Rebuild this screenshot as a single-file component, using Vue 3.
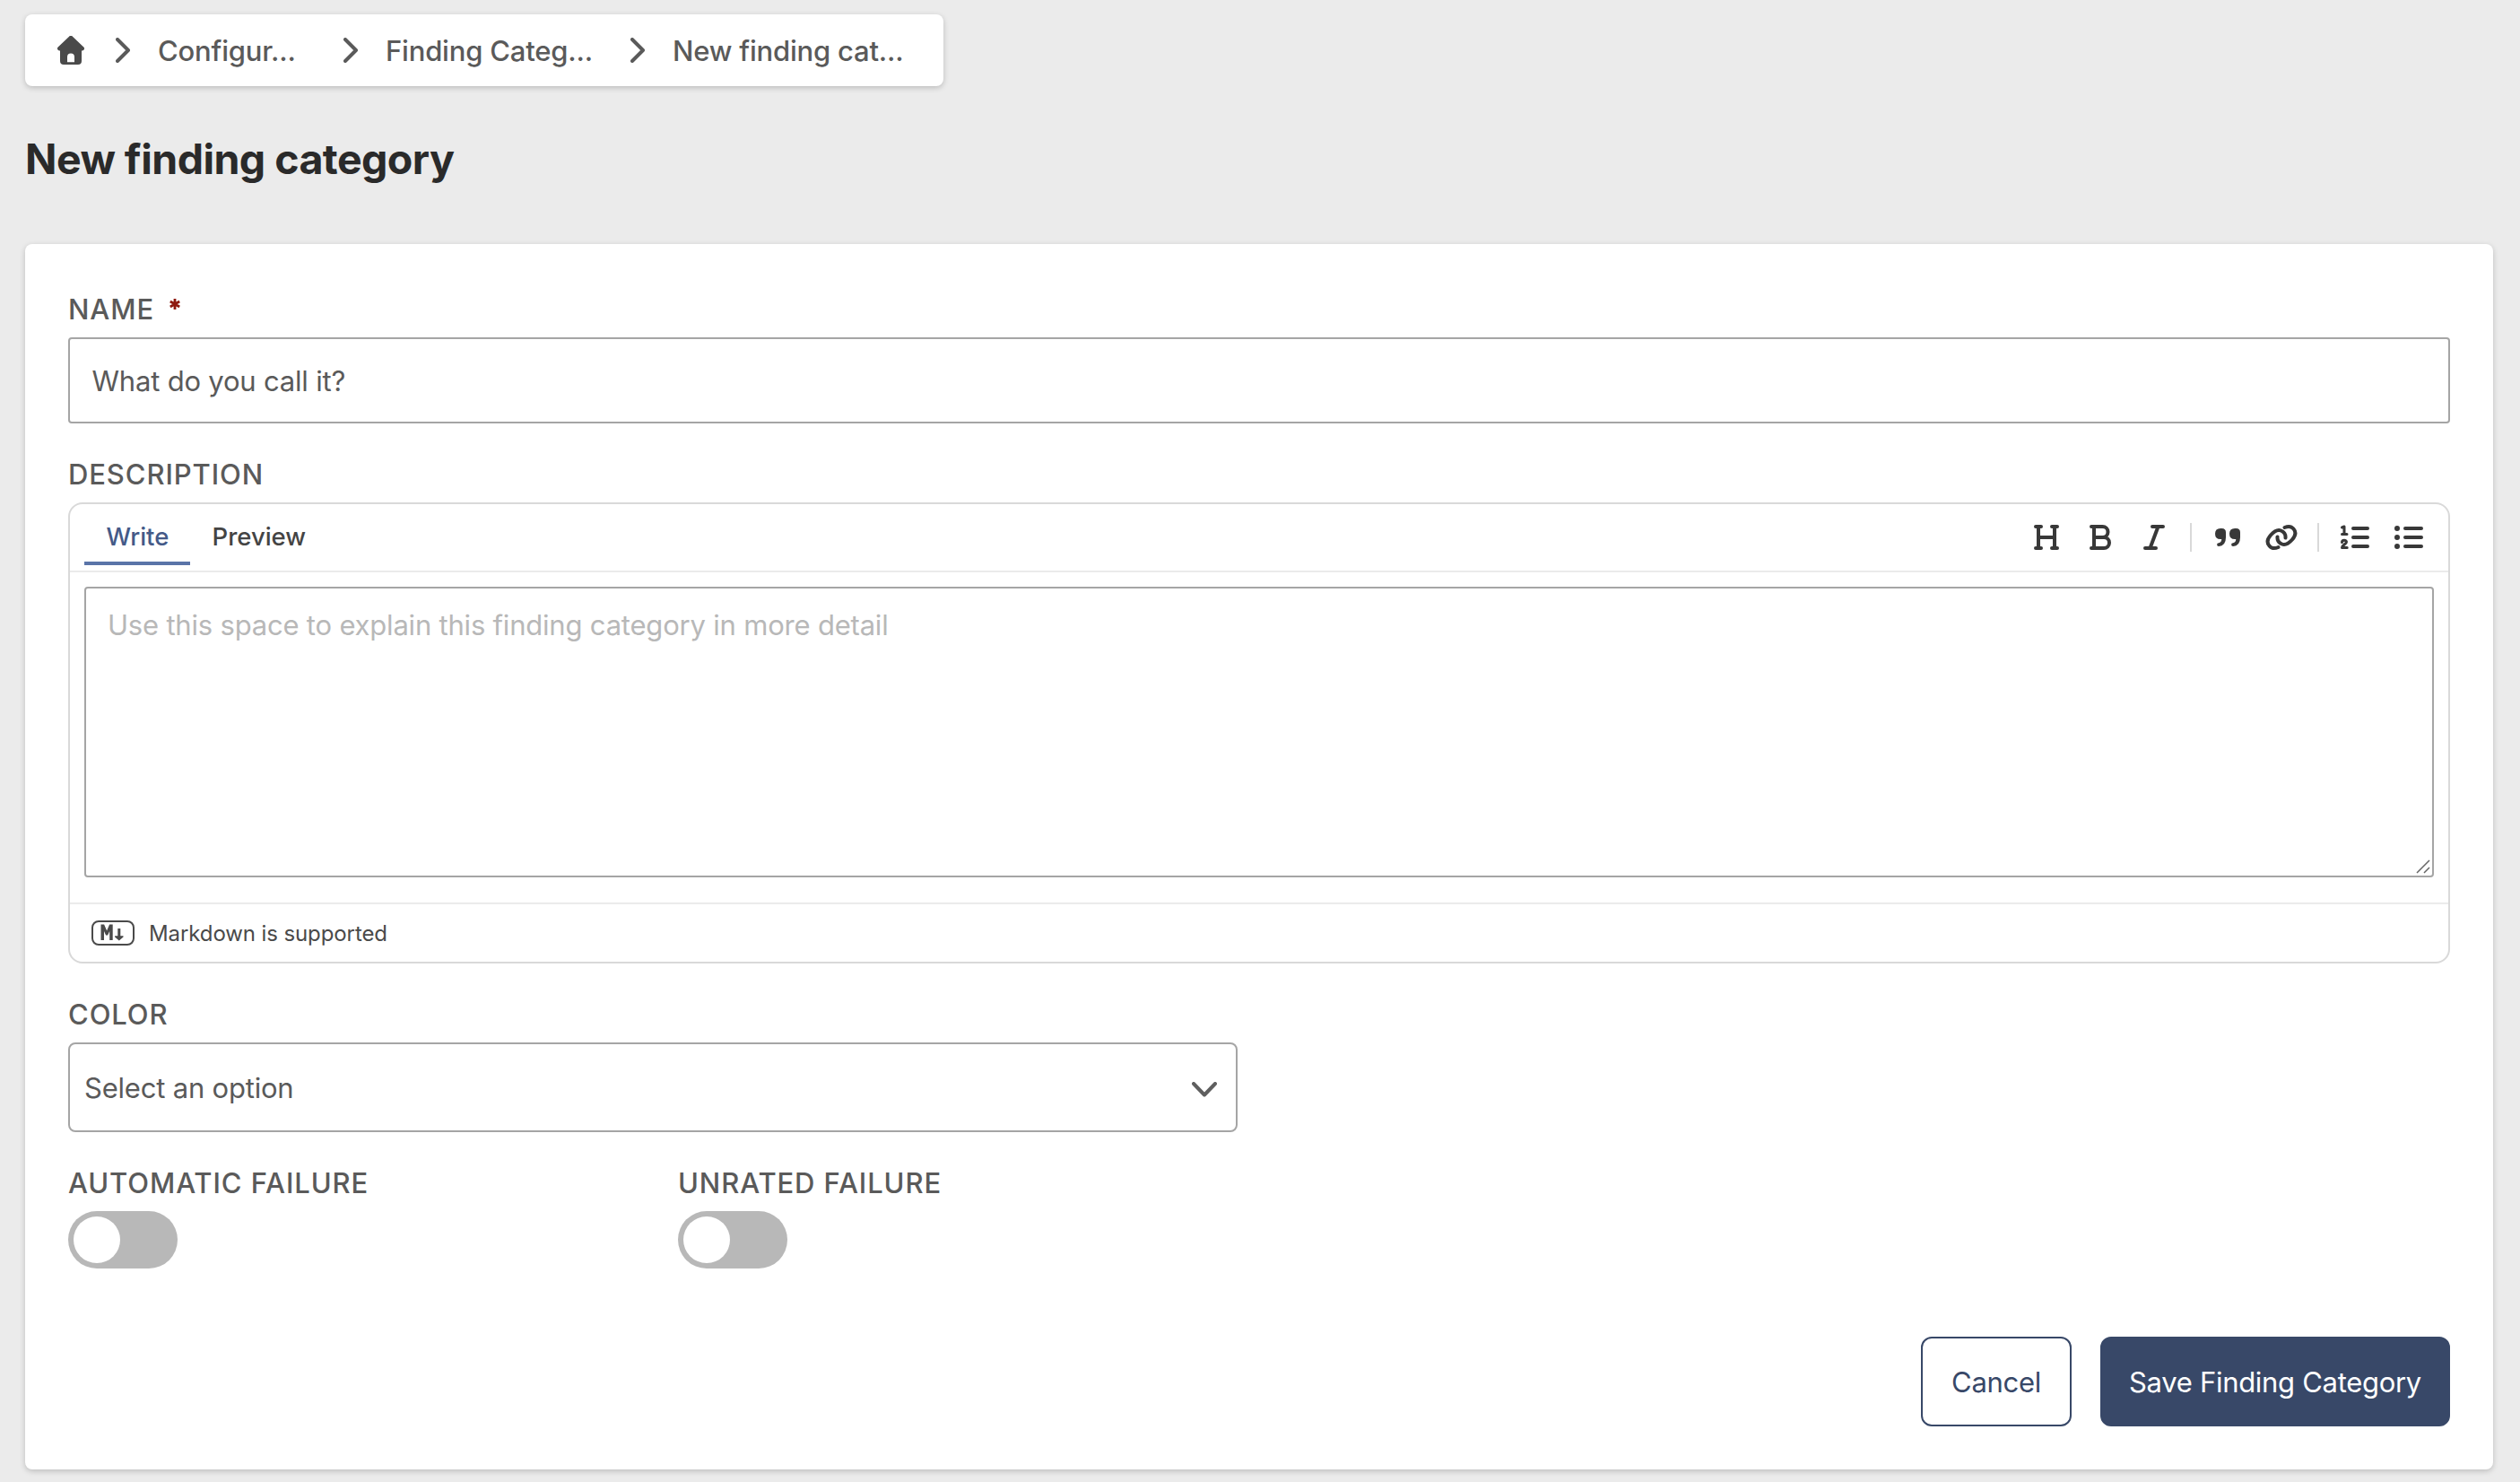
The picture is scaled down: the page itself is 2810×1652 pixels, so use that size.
<script setup>
import { ref } from 'vue'

const crumbs = ['Configur...', 'Finding Categ...', 'New finding cat...']
const toggles = ref([
  { label: 'AUTOMATIC FAILURE', on: false },
  { label: 'UNRATED FAILURE', on: false },
])
</script>

<template>
  <div class="page">
    <nav class="crumbs">
      <svg class="home" width="30" height="32" viewBox="0 0 30 32">
        <path d="M12.8 .9a3.1 3.1 0 0 1 4.4 0L29.3 12.600a2.200 2.200 0 0 1-1.600 3.800H27V28a4 4 0 0 1-4 4H7a4 4 0 0 1-4-4V16.400H2.300A2.200 2.200 0 0 1 .7 12.600ZM11 29.200h8V23.500a4 4 0 0 0-8 0Z" fill="#4a4a4a" fill-rule="evenodd" />
      </svg>
      <template v-for="c in crumbs" :key="c">
        <svg class="sep" width="16" height="28" viewBox="0 0 16 28">
          <path d="M2 2l12 12L2 26" fill="none" stroke="#5a5a5a" stroke-width="4" stroke-linecap="round" stroke-linejoin="round" />
        </svg>
        <span class="crumb">{{ c }}</span>
      </template>
    </nav>

    <h1>New finding category</h1>

    <form class="card" @submit.prevent>
      <label class="lbl">NAME<svg class="req" width="12" height="12" viewBox="0 0 12 12"><path d="M6 0v12M.8 3l10.400 6M.8 9L11.200 3" stroke="#8f1a10" stroke-width="2.800" /></svg></label>
      <div class="input"><span>What do you call it?</span></div>

      <label class="lbl">DESCRIPTION</label>
      <div class="editor">
        <div class="bar">
          <div class="tab active">Write</div>
          <div class="tab">Preview</div>
          <div class="tools">
            <svg viewBox="0 0 40 40"><path d="M8 8h6M26 8h6M8 32h6M26 32h6M11 8v24M29 8v24M11 20h18" /></svg>
            <svg viewBox="0 0 40 40"><path d="M10 8h12.500a6 6 0 0 1 0 12H13M22 20h2a6 6 0 0 1 0 12H10M13 8v24" /></svg>
            <svg viewBox="0 0 40 40"><path d="M18 8h12M10 32h12M24.500 8l-9 24" /></svg>
            <i class="rule"></i>
            <svg viewBox="0 0 40 40"><path class="fill" d="M12 10h1.500q4.500 0 4.500 4.500V20q0 9.500-8 10a1.900 1.900 0 0 1 0-3.800q3-.4 3.300-4.200H12q-6 0-6-6t6-6ZM28 10h1.500q4.500 0 4.500 4.500V20q0 9.500-8 10a1.900 1.900 0 0 1 0-3.800q3-.4 3.300-4.200H28q-6 0-6-6t6-6Z" /></svg>
            <svg viewBox="0 0 40 40"><path d="M16.500 31C13 32.500 9 32.500 6.500 29.500 3 25.500 4.500 21.500 8 17.500 12 13 16 11 19.500 12.500 23 14 24.800 17 24.500 20.500M23.500 9C27 7.500 31 7.500 33.500 10.500 37 14.500 35.500 18.500 32 22.500 28 27 24 29 20.500 27.500 17 26 15.200 23 15.500 19.500" /></svg>
            <i class="rule"></i>
            <svg viewBox="0 0 40 40"><path d="M18 10h16M18 20h16M18 30h16" /><path class="thin" d="M5.500 9l2.500-1v8M5.500 16.500h5.500M5.500 25.500c0-3 5-3 5-.4 0 2.400-4.500 3-5 6.400h5.700" /></svg>
            <svg viewBox="0 0 40 40"><path d="M16 10h18M16 20h18M16 30h18" /><path class="fill" d="M7 7a3 3 0 1 1 0 6a3 3 0 0 1 0-6M7 17a3 3 0 1 1 0 6a3 3 0 0 1 0-6M7 27a3 3 0 1 1 0 6a3 3 0 0 1 0-6" /></svg>
          </div>
        </div>
        <div class="area">
          <span>Use this space to explain this finding category in more detail</span>
          <svg class="grip" width="16" height="16" viewBox="0 0 16 16"><path d="M1 15L15 1M9 15l6-6" stroke="#666" stroke-width="1.500" /></svg>
        </div>
        <div class="foot">
          <svg width="48" height="28" viewBox="0 0 48 28">
            <rect x="1" y="1" width="46" height="26" rx="7" fill="none" stroke="#4a4a4a" stroke-width="2" />
            <path d="M10.500 22V4.500h3.600l3 7 3-7h3.600V22h-3.500V12l-2.100 4.500h-2L14 12v10ZM29.300 9h3v8.300h3.200v1.200l-4.700 4-4.700-4v-1.200h3.200Z" fill="#4a4a4a" />
          </svg>
          <span>Markdown is supported</span>
        </div>
      </div>

      <label class="lbl">COLOR</label>
      <div class="select">
        <span>Select an option</span>
        <svg width="28" height="17" viewBox="0 0 28 17"><path d="M2 2l12 12.500L26 2" fill="none" stroke="#5f5f5f" stroke-width="4" stroke-linecap="round" stroke-linejoin="round" /></svg>
      </div>

      <div class="toggles">
        <div v-for="t in toggles" :key="t.label" class="tcol">
          <label class="lbl">{{ t.label }}</label>
          <div class="switch" :class="{ on: t.on }" @click="t.on = !t.on"><b></b></div>
        </div>
      </div>

      <div class="actions">
        <button class="btn cancel" type="button">Cancel</button>
        <button class="btn save" type="submit">Save Finding Category</button>
      </div>
    </form>
  </div>
</template>

<style>
html, body { background: #ebebeb; }
</style>

<style scoped>
* { box-sizing: border-box; }
.page {
  width: 2810px;
  height: 1652px;
  padding: 16px 30px 14px 28px;
  overflow: hidden;
  background: #ebebeb;
  color: #5a5a5a;
  font-family: Inter, "Liberation Sans", sans-serif;
  font-size: 31px;
  letter-spacing: -.2px;
  white-space: nowrap;
}
svg { display: block; flex: none; }
.crumbs {
  display: flex;
  align-items: center;
  width: 1024px;
  height: 80px;
  padding-left: 36px;
  background: #fff;
  border-radius: 8px;
  box-shadow: 0 2px 6px rgba(0, 0, 0, .2);
  font-weight: 500;
}
.sep { margin-left: 35px; }
.crumb { width: 203px; padding-left: 31px; }
.crumb:nth-of-type(2) { width: 269px; }
h1 {
  margin: 52px 0 66px;
  font-size: 46.500px;
  line-height: 58px;
  font-weight: 700;
  letter-spacing: -.55px;
  color: #2a2a2a;
}
.card {
  height: 1366px;
  padding: 48px;
  background: #fff;
  border-radius: 8px;
  box-shadow: 0 2px 6px rgba(0, 0, 0, .2);
}
.lbl {
  display: flex;
  height: 56px;
  line-height: 50px;
  font-weight: 500;
  letter-spacing: .9px;
}
.req { margin: 13px 0 0 17px; }
.input {
  display: flex;
  align-items: center;
  height: 96px;
  margin-bottom: 32px;
  padding-left: 24.500px;
  border: 2px solid #a5a5a5;
  border-radius: 4px;
}
.editor {
  display: flex;
  flex-direction: column;
  height: 514px;
  margin-bottom: 32px;
  border: 2px solid #d9d9d9;
  border-radius: 16px;
}
.bar {
  display: flex;
  height: 76px;
  padding: 0 24px 0 16px;
  border-bottom: 2px solid #ebebeb;
  font-size: 27.500px;
  letter-spacing: 0;
  font-weight: 500;
  color: #444;
}
.tab { height: 68px; width: 118px; padding-left: 24.500px; line-height: 73px; }
.tab.active { border-bottom: 4px solid #5a74a8; color: #445a88; }
.tools { display: flex; align-items: center; gap: 20px; margin-left: auto; }
.tools svg { width: 40px; height: 40px; fill: none; stroke: #383838; stroke-width: 4; stroke-linecap: round; stroke-linejoin: round; }
.tools .fill { fill: #383838; stroke: none; }
.tools .thin { stroke-width: 3; }
.rule { width: 2px; height: 32px; background: #d9d9d9; }
.area {
  position: relative;
  height: 324px;
  margin: 16px 16px 28px;
  padding: 18px 24px;
  border: 2px solid #a5a5a5;
  border-radius: 4px;
  line-height: 46px;
  color: #b8b8b8;
}
.grip { position: absolute; right: 2px; bottom: 2px; }
.foot {
  display: flex;
  align-items: center;
  gap: 16px;
  height: 66px;
  padding-left: 24px;
  border-top: 2px solid #ebebeb;
  font-size: 24px;
  letter-spacing: -.1px;
  color: #4a4a4a;
}
.select {
  display: flex;
  align-items: center;
  justify-content: space-between;
  width: 1304px;
  height: 100px;
  margin-bottom: 32px;
  padding: 0 21px 0 16px;
  border: 2px solid #a5a5a5;
  border-radius: 8px;
}
.select svg { margin-top: 4px; }
.toggles { display: flex; }
.tcol { width: 680px; }
.switch { width: 122px; height: 64px; padding: 6px; border-radius: 32px; background: #b8b8b8; }
.switch b { display: block; width: 52px; height: 52px; border-radius: 50%; background: #fff; }
.switch.on b { margin-left: 58px; }
.actions { display: flex; justify-content: flex-end; gap: 32px; margin-top: 76px; }
.btn {
  height: 100px;
  padding: 0;
  border: 2px solid #384868;
  border-radius: 12px;
  background: #fff;
  color: #384868;
  font: inherit;
  letter-spacing: -.3px;
}
.cancel { width: 168px; }
.save { width: 390px; background: #384868; color: #fff; }
</style>
